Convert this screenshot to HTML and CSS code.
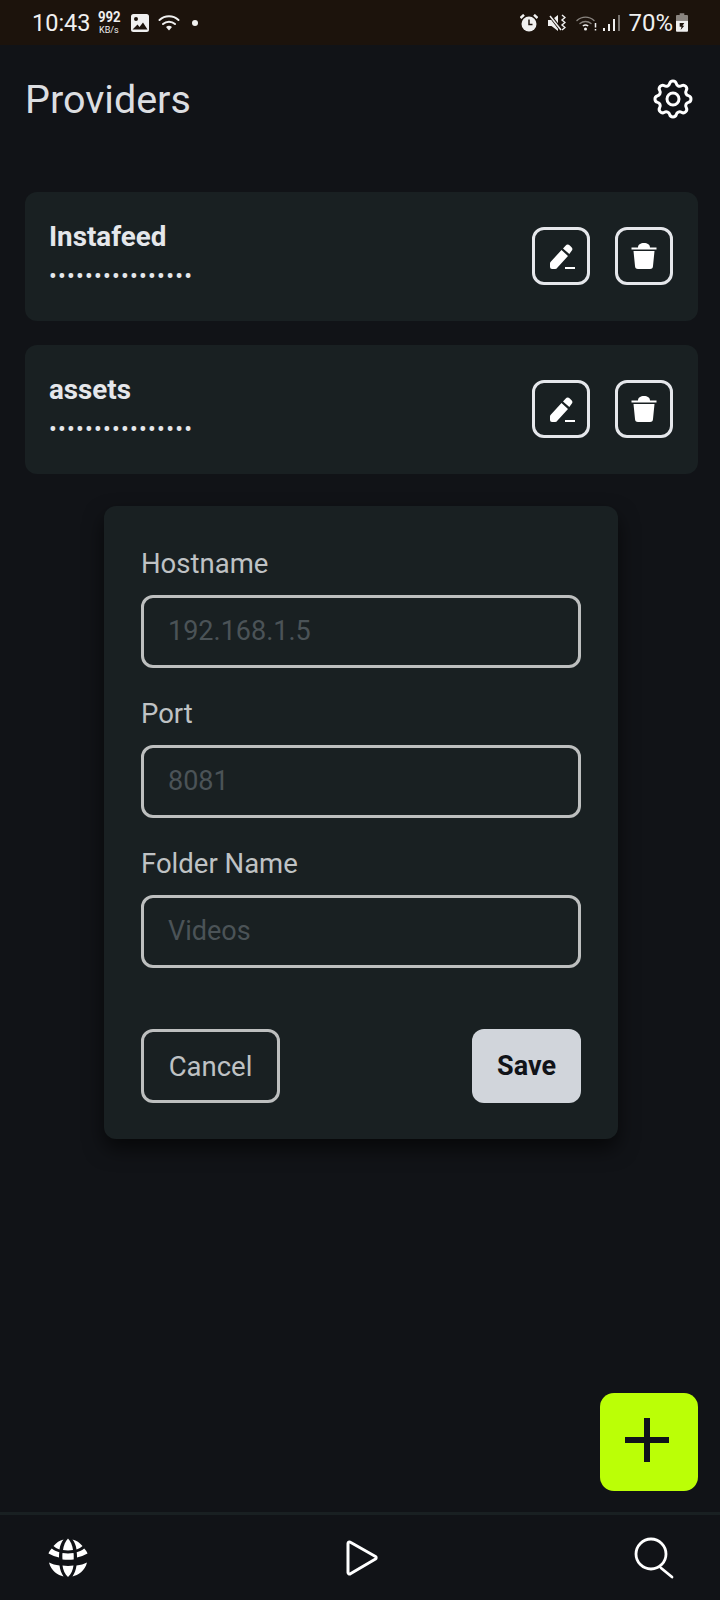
FILE: index.html
```html
<!DOCTYPE html>
<html lang="en">
<head>
    <meta charset="UTF-8">
    <meta name="viewport" content="width=device-width, initial-scale=1.0">
    <title>Providers</title>
    <link rel="stylesheet" href="styles.css">
</head>
<body>
    <div class="status-bar">
        <div class="status-left">
            <span class="clock">10:43</span>
            <span class="speed"><b>992</b><i>KB/s</i></span>
            <svg class="st-icon" width="18" height="18" viewBox="0 0 18 18"><path fill="#f0f0f0" fill-rule="evenodd" d="M2.500 0h13A2.500 2.500 0 0 1 18 2.500v13a2.500 2.500 0 0 1-2.500 2.500h-13A2.500 2.500 0 0 1 0 15.500v-13A2.500 2.500 0 0 1 2.500 0zM1.500 15.500h15l-4.500-7-3.500 4.500-2-2.500zM5 3a2 2 0 1 0 0 4 2 2 0 0 0 0-4z"/></svg>
            <svg class="st-icon wifi" width="22" height="16" viewBox="0 0 22 16"><g fill="none" stroke="#f0f0f0" stroke-width="2" stroke-linecap="round"><path d="M1.500 5a14 14 0 0 1 19 0"/><path d="M5 9a9 9 0 0 1 12 0"/></g><path fill="#f0f0f0" d="M8 12a4.500 4.500 0 0 1 6 0l-3 3.500z"/></svg>
            <span class="dot"></span>
        </div>
        <div class="status-right">
            <svg class="alarm" width="18" height="18" viewBox="0 0 18 18"><circle cx="9" cy="10" r="7.500" fill="#f0f0f0"/><path d="M9 5.500V10.500h3.500" fill="none" stroke="#1c130c" stroke-width="1.500"/><path d="M0.500 4 4 0.800M17.500 4 14 0.800" stroke="#f0f0f0" stroke-width="2.500"/></svg>
            <svg class="mute" width="18" height="18" viewBox="0 0 18 18"><path fill="#f0f0f0" d="M0 6h3.500L10 1v16l-6.500-5H0z"/><path d="M2 1.500 13 16" stroke="#1c130c" stroke-width="3.500"/><path d="M2 2 13 16" stroke="#f0f0f0" stroke-width="1.500"/><path d="M14 1l3 2.500-3 2.500 3 2.500-3 2.500 3 2.500-3 2.500" fill="none" stroke="#f0f0f0" stroke-width="1.400"/></svg>
            <svg class="wifi-off" width="21" height="16" viewBox="0 0 21 16"><g fill="none" stroke="#8a8580" stroke-width="1.400" stroke-linecap="round"><path d="M1 5.500a12.500 12.500 0 0 1 17 0"/><path d="M4 8.500a8.500 8.500 0 0 1 11 0"/></g><path d="M6.800 11a4.500 4.500 0 0 1 5.400 0" fill="none" stroke="#f0f0f0" stroke-width="1.400"/><circle cx="9.500" cy="14" r="1.500" fill="#f0f0f0"/><path d="M19.500 8v4.500M19.500 14v1.500" stroke="#f0f0f0" stroke-width="1.500"/></svg>
            <svg class="signal" width="17" height="18" viewBox="0 0 17 18"><path fill="#f0f0f0" d="M0 14h2v3H0zM5 10h2v7H5zM10 5h2v12h-2z"/><path fill="#77726d" d="M15 1h2v16h-2z"/></svg>
            <span class="battery-text">70%</span>
            <svg class="batt" width="12" height="19" viewBox="0 0 13 20"><path fill="#8a8580" d="M4 0h5v2h3a1 1 0 0 1 1 1v5H0V3a1 1 0 0 1 1-1h3z"/><path fill="#f0f0f0" d="M0 8h13v11a1 1 0 0 1-1 1H1a1 1 0 0 1-1-1z"/><path fill="#1c130c" d="M4 10.500h5l-2 3h2l-4 4.500 1-3.500H4z"/></svg>
        </div>
    </div>

    <div class="header">
        <h1>Providers</h1>
        <svg class="gear" width="48" height="48" viewBox="0 0 24 24" fill="none" stroke="#fff" stroke-width="1.500" stroke-linecap="round" stroke-linejoin="round">
            <path d="M10.300 4.320c.430-1.760 2.930-1.760 3.360 0a1.720 1.720 0 0 0 2.580 1.070c1.540-.940 3.300.830 2.370 2.370a1.720 1.720 0 0 0 1.070 2.570c1.750.430 1.750 2.930 0 3.360a1.720 1.720 0 0 0-1.070 2.580c.940 1.540-.830 3.300-2.370 2.370a1.720 1.720 0 0 0-2.570 1.070c-.430 1.750-2.930 1.750-3.360 0a1.720 1.720 0 0 0-2.580-1.070c-1.540.940-3.300-.830-2.370-2.370a1.720 1.720 0 0 0-1.070-2.570c-1.750-.430-1.750-2.930 0-3.360a1.720 1.720 0 0 0 1.070-2.580c-.940-1.540.830-3.300 2.370-2.370.990.600 2.300.070 2.570-1.070z"/>
            <circle cx="12" cy="12" r="3"/>
        </svg>
    </div>

    <div class="provider-list">
        <div class="provider">
            <div class="provider-info">
                <div class="provider-name">Instafeed</div>
                <div class="provider-pass">••••••••••••••••</div>
            </div>
            <div class="provider-actions">
                <button class="icon-btn"><svg width="28" height="28" viewBox="0 0 28 28"><path fill="#fff" d="M3.500 20 14.500 8 21 14 10.500 25.500Q9.500 27 8 27H5Q3 27 3 25V21.500Q3 20.500 3.500 20z"/><path fill="#fff" d="M16 6.500l2.500-2.700a3 3 0 0 1 4.300-.2l1.500 1.300a3 3 0 0 1 .2 4.200L22.300 12z"/><path fill="#fff" d="M18 25h10v2H18z"/></svg></button>
                <button class="icon-btn"><svg width="28" height="28" viewBox="0 0 28 28"><path fill="#fff" d="M1.500 5.500h25v2h-25zM8 5.500C8 2.500 10.500 1 14 1s6 1.500 6 4.500zM3.500 9h21l-1.500 15a3 3 0 0 1-3 3H8a3 3 0 0 1-3-3z"/></svg></button>
            </div>
        </div>
        <div class="provider">
            <div class="provider-info">
                <div class="provider-name">assets</div>
                <div class="provider-pass">••••••••••••••••</div>
            </div>
            <div class="provider-actions">
                <button class="icon-btn"><svg width="28" height="28" viewBox="0 0 28 28"><path fill="#fff" d="M3.500 20 14.500 8 21 14 10.500 25.500Q9.500 27 8 27H5Q3 27 3 25V21.500Q3 20.500 3.500 20z"/><path fill="#fff" d="M16 6.500l2.500-2.700a3 3 0 0 1 4.300-.2l1.500 1.300a3 3 0 0 1 .2 4.200L22.300 12z"/><path fill="#fff" d="M18 25h10v2H18z"/></svg></button>
                <button class="icon-btn"><svg width="28" height="28" viewBox="0 0 28 28"><path fill="#fff" d="M1.500 5.500h25v2h-25zM8 5.500C8 2.500 10.500 1 14 1s6 1.500 6 4.500zM3.500 9h21l-1.500 15a3 3 0 0 1-3 3H8a3 3 0 0 1-3-3z"/></svg></button>
            </div>
        </div>
    </div>

    <div class="modal">
        <label class="field-label">Hostname</label>
        <div class="input">192.168.1.5</div>
        <label class="field-label">Port</label>
        <div class="input">8081</div>
        <label class="field-label">Folder Name</label>
        <div class="input">Videos</div>
        <div class="modal-buttons">
            <button class="btn-cancel">Cancel</button>
            <button class="btn-save">Save</button>
        </div>
    </div>

    <button class="fab"><svg width="44" height="44" viewBox="0 0 44 44"><path fill="#10131a" d="M19 0h6v19h19v6H25v19h-6V25H0v-6h19z"/></svg></button>

    <div class="bottom-nav">
        <svg width="40" height="40" viewBox="0 0 40 40"><g fill="#fff">
            <path d="M15.500 1.500C11.500 2.500 8.500 4.500 5.500 8c1.500 1.500 3.500 2.500 6 3.500.5-4 2-7.500 4-10z"/>
            <path d="M20 .5c-2.500 2.500-4.500 7-5 11.500 3 .5 7 .5 10 0-.5-4.500-2.500-9-5-11.500z"/>
            <path d="M24.500 1.500c4 1 7 3 10 6.500-1.500 1.500-3.500 2.500-6 3.500-.5-4-2-7.500-4-10z"/>
            <path d="M3.800 10.500c2 1.700 4.500 3 7.500 3.800-.3 1.500-.3 3.300-.3 5.200-3.500-.7-7-2-10.500-4 .5-1.800 1.700-3.500 3.300-5z"/>
            <path d="M14.500 15c3.500.5 7.500.5 11 0 .3 1.500.3 4.500.2 6.500-3.500.3-7.700.3-11.200 0-.2-2-.2-5 0-6.500z"/>
            <path d="M36.200 10.500c-2 1.700-4.500 3-7.500 3.800.3 1.500.3 3.300.3 5.200 3.500-.7 7-2 10.500-4-.5-1.800-1.700-3.500-3.300-5z"/>
            <path d="M1 24.500c3 1.500 6.500 2.500 10.500 3 .5 4 2 8 4 11C10 37 3 33 1 24.500z"/>
            <path d="M14.500 27.500c3.500.5 7.500.5 11 0-.5 4.500-2.500 9-5.500 11.500-3-2.500-5-7-5.500-11.500z"/>
            <path d="M39 24.500c-3 1.500-6.500 2.500-10.500 3-.5 4-2 8-4 11 5.500-1.500 12.500-5.500 14.500-14z"/>
        </g></svg>
        <svg class="nav-play" width="34" height="36" viewBox="0 0 34 36"><path d="M3 3.500v29a1.500 1.500 0 0 0 2.400 1.200L30.500 19a1.500 1.500 0 0 0 0-2.500L5.400 2.300A1.500 1.500 0 0 0 3 3.500z" fill="none" stroke="#fff" stroke-width="3" stroke-linejoin="round"/></svg>
        <svg width="42" height="42" viewBox="0 0 42 42" fill="none" stroke="#fff" stroke-width="2.800" stroke-linecap="round"><circle cx="17" cy="17" r="15"/><path d="M27 31 38 40"/></svg>
    </div>
</body>
</html>
```

FILE: styles.css
```css
* {
    box-sizing: border-box;
}
body {
    font-family: Roboto, "Liberation Sans", sans-serif;
    background-color: #111317;
    margin: 0;
    width: 720px;
    height: 1600px;
    display: flex;
    flex-direction: column;
    position: relative;
    overflow: hidden;
}
.status-bar {
    height: 45px;
    background-color: #1c130c;
    color: #f0f0f0;
    display: flex;
    justify-content: space-between;
    align-items: center;
    padding: 0 32px;
    flex-shrink: 0;
}
.status-left, .status-right {
    display: flex;
    align-items: center;
}
.clock {
    font-size: 23.500px;
}
.speed {
    display: flex;
    flex-direction: column;
    align-items: center;
    margin-left: 5px;
    margin-right: 9px;
    line-height: 1;
}
.speed b {
    font-size: 15.500px;
    font-weight: 700;
    transform: scaleX(0.85);
}
.speed i {
    font-size: 9px;
    font-style: normal;
}
.st-icon.wifi {
    margin-left: 9px;
}
.dot {
    width: 6px;
    height: 6px;
    border-radius: 50%;
    background-color: #f0f0f0;
    margin-left: 12px;
}
.mute {
    margin-left: 10px;
}
.wifi-off {
    margin-left: 10px;
}
.signal {
    margin-left: 6px;
}
.battery-text {
    font-size: 24px;
    margin-left: 8px;
}
.batt {
    margin-left: 3px;
}
.header {
    height: 106px;
    display: flex;
    justify-content: space-between;
    align-items: center;
    padding: 0 25px;
    flex-shrink: 0;
}
.header h1 {
    font-size: 39.500px;
    font-weight: 400;
    color: #dcdee1;
    margin: 0;
    position: relative;
    top: 1px;
}
.gear {
    margin-right: -2px;
    position: relative;
    top: 1px;
}
.provider-list {
    padding: 41px 22px 0 25px;
    display: flex;
    flex-direction: column;
    gap: 24px;
}
.provider {
    height: 129px;
    background-color: #192022;
    border-radius: 12px;
    display: flex;
    justify-content: space-between;
    align-items: center;
    padding: 0 25px 0 24px;
}
.provider-info {
    position: relative;
    top: -2px;
}
.provider-name {
    font-size: 27.750px;
    font-weight: 700;
    color: #e5e7eb;
}
.provider-pass {
    font-size: 23px;
    line-height: 24px;
    color: #e5e7eb;
    margin-top: 12px;
    letter-spacing: 1.250px;
}
.provider-actions {
    display: flex;
    gap: 25px;
    position: relative;
    top: -1px;
}
.icon-btn {
    width: 58px;
    height: 58px;
    border: 3px solid #e5e7eb;
    border-radius: 12px;
    background: none;
    padding: 0;
    display: flex;
    align-items: center;
    justify-content: center;
}
.modal {
    position: absolute;
    left: 104px;
    top: 506px;
    width: 514px;
    height: 633px;
    background-color: #192022;
    border-radius: 12px;
    box-shadow: 0 10px 20px rgba(0, 0, 0, 0.6);
    padding: 42px 37px 36px;
    display: flex;
    flex-direction: column;
}
.field-label {
    font-size: 27.500px;
    line-height: 32px;
    color: #bfc2c4;
    margin-bottom: 15px;
}
.input {
    height: 73px;
    border: 3px solid #bdbfbf;
    border-radius: 12px;
    font-size: 27px;
    color: #4b5357;
    padding: 0 0 2px 24px;
    display: flex;
    align-items: center;
    margin-bottom: 30px;
    flex-shrink: 0;
}
.modal-buttons {
    display: flex;
    justify-content: space-between;
    margin-top: 31px;
}
.btn-cancel, .btn-save {
    font-family: Roboto, "Liberation Sans", sans-serif;
    font-size: 27.500px;
    height: 74px;
    border-radius: 12px;
}
.btn-cancel {
    width: 139px;
    border: 3px solid #bdbfbf;
    background: none;
    color: #bfc2c4;
}
.btn-save {
    width: 109px;
    border: none;
    background-color: #d1d5db;
    color: #111318;
    font-weight: 700;
    font-size: 27px;
}
.fab {
    position: absolute;
    left: 600px;
    top: 1393px;
    width: 98px;
    height: 98px;
    border: none;
    border-radius: 14px;
    background-color: #bbff06;
    display: flex;
    align-items: center;
    justify-content: center;
    padding: 0 4px 4px 0;
}
.bottom-nav {
    margin-top: auto;
    height: 88px;
    border-top: 3px solid #192022;
    display: flex;
    justify-content: space-between;
    align-items: center;
    padding: 0 44px 0 48px;
}
.nav-play {
    margin-left: 2px;
}
```
